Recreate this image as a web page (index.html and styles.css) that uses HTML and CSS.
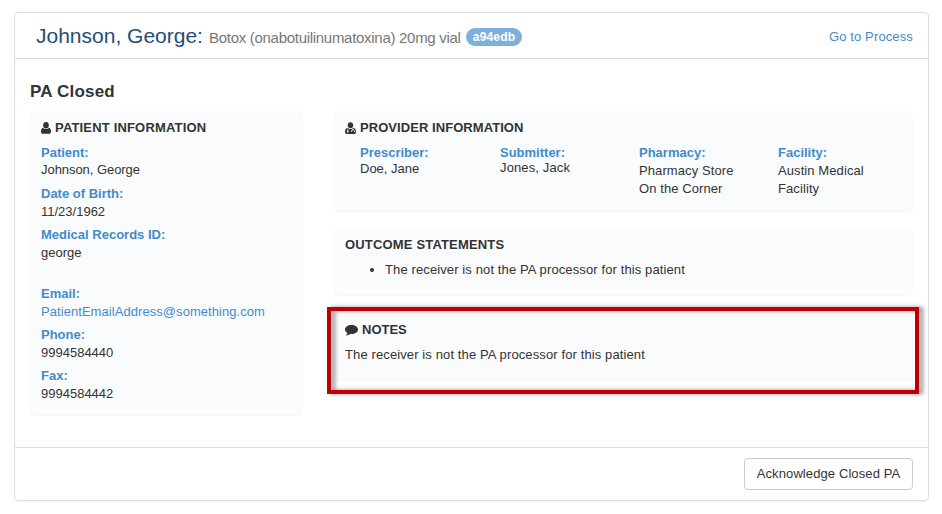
FILE: index.html
```html
<!DOCTYPE html>
<html lang="en">
<head>
<meta charset="utf-8">
<title>PA Closed</title>
<link rel="stylesheet" href="styles.css">
</head>
<body>
<main class="panel">
  <header class="panel-head">
    <h1><span class="name">Johnson, George:</span> <small class="drug">Botox (onabotuilinumatoxina) 20mg vial</small> <span class="badge">a94edb</span></h1>
    <a class="process" href="#">Go to Process</a>
  </header>
  <div class="panel-body">
    <h2><span>PA Closed</span></h2>
    <div class="columns">
      <section class="well patient">
        <h3><svg class="icon-user" viewBox="0 0 10 12" width="10" height="12"><ellipse cx="5" cy="3.3" rx="2.8" ry="3.2"/><path d="M2 5.700C.6 6 0 7.400 0 9.500 0 11 .8 11.800 2 11.800H8C9.200 11.800 10 11 10 9.500C10 7.400 9.400 6 8 5.700C7 7.400 3 7.400 2 5.700Z"/></svg><span>PATIENT INFORMATION</span></h3>
        <dl class="fields">
          <div class="first"><dt>Patient:</dt><dd><span>Johnson, George</span></dd></div>
          <div><dt>Date of Birth:</dt><dd>11/23/1962</dd></div>
          <div class="record"><dt>Medical Records ID:</dt><dd>george</dd></div>
          <div><dt>Email:</dt><dd class="email"><a href="#">PatientEmailAddress@something.com</a></dd></div>
          <div><dt>Phone:</dt><dd>9994584440</dd></div>
          <div><dt>Fax:</dt><dd>9994584442</dd></div>
        </dl>
      </section>
      <div class="details">
        <section class="well provider">
          <h3 class="provider-title"><svg class="icon-md" viewBox="0 0 11 12" width="11" height="12"><ellipse cx="5.500" cy="3.200" rx="2.700" ry="3"/><path d="M2.800 5.800C1 6 0 7.500 0 9.700 0 11.200.8 12 2.200 12h6.600c1.400 0 2.200-.8 2.200-2.300C11 7.500 10 6 8.200 5.800 7 7.500 4 7.500 2.800 5.800z"/><path class="detail" d="M2.800 6.500v2.500M8 6.500v1.300M6.500 10V9c0-1.600 3-1.600 3 0v1"/><circle class="hole" cx="2.800" cy="9.700" r=".9"/></svg><span>PROVIDER INFORMATION</span></h3>
          <dl class="provider-grid">
            <div><dt>Prescriber:</dt><dd class="tight">Doe, Jane</dd></div>
            <div><dt>Submitter:</dt><dd class="tighter">Jones, Jack</dd></div>
            <div><dt>Pharmacy:</dt><dd class="spaced">Pharmacy Store<br>On the Corner</dd></div>
            <div><dt>Facility:</dt><dd class="spaced">Austin Medical<br>Facility</dd></div>
          </dl>
        </section>
        <section class="well outcome">
          <h3><span>OUTCOME STATEMENTS</span></h3>
          <ul><li class="statement">The receiver is not the PA processor for this patient</li></ul>
        </section>
        <section class="well notes">
          <h3 class="notes-title"><svg class="icon-comment" viewBox="0 0 13 12" width="13" height="12"><path d="M6.500 1C2.900 1 0 3 0 5.500c0 1.400.9 2.700 2.400 3.500-.2 1-.7 1.600-1.300 2.200-.2.200 0 .5.300.4 1.500-.2 2.800-.8 3.800-1.700l1.300.1C10.100 10 13 8 13 5.500S10.100 1 6.500 1z"/></svg><span>NOTES</span></h3>
          <p class="statement">The receiver is not the PA processor for this patient</p>
          <div class="callout"></div>
        </section>
      </div>
    </div>
  </div>
  <footer class="panel-foot"><button type="button">Acknowledge Closed PA</button></footer>
</main>
</body>
</html>
```
FILE: styles.css
```css
* { box-sizing: border-box; }
body {
  margin: 0;
  padding: 12px 13px 13px 14px;
  background: #fff;
  color: #333;
  font: 13px/18px "Liberation Sans", Arial, sans-serif;
}
h1, h2, h3, p, dl, dd, ul { margin: 0; }
a { color: #428bca; text-decoration: none; }
.panel {
  display: flex;
  flex-direction: column;
  height: 489px;
  border: 1px solid #ddd;
  border-radius: 4px;
  box-shadow: 0 1px 1px rgba(0, 0, 0, .05);
}
.panel-head {
  display: flex;
  justify-content: space-between;
  height: 46px;
  padding: 0 15px 0 21px;
  border-bottom: 1px solid #ddd;
}
h1 {
  display: flex;
  align-items: baseline;
  font-weight: normal;
  line-height: 46px;
}
.name { width: 173px; color: #1f4e79; font-size: 21px; white-space: nowrap; }
.drug { width: 257px; color: #777; font-size: 15px; letter-spacing: -.29px; white-space: nowrap; }
.badge {
  align-self: flex-start;
  width: 56px;
  height: 18px;
  margin-top: 15px;
  border-radius: 9px;
  background: #7eb0de;
  color: #fff;
  font-size: 12px;
  font-weight: bold;
  letter-spacing: .15px;
  line-height: 18px;
  text-align: center;
}
.process { line-height: 48px; letter-spacing: .13px; }
.panel-body { flex: 1; padding: 20px 15px 0; }
h2 { height: 32px; font-size: 17px; line-height: 25px; letter-spacing: .2px; }
.columns { display: flex; gap: 31px; }
.well {
  border-radius: 4px;
  background: #fafbfd;
  box-shadow: 0 1px 1px rgba(0, 0, 0, .04);
  padding: 8px 11px 0;
}
.patient { width: 273px; height: 304px; }
.details { flex: 1; display: flex; flex-direction: column; gap: 17px; }
h3 {
  display: flex;
  align-items: center;
  height: 18px;
  margin-bottom: 7px;
  font-size: 13px;
  letter-spacing: .17px;
}
.provider-title { letter-spacing: .06px; }
.notes-title { letter-spacing: 0; }
h3 svg { fill: #333; flex: none; }
.icon-user, .icon-md, .icon-comment { margin-right: 4px; }
.detail { fill: none; stroke: #fafbfd; stroke-width: .8; }
.hole { fill: #fafbfd; }
dt { color: #428bca; font-weight: bold; }
.fields { display: flex; flex-direction: column; gap: 5px; }
.first dd { margin-top: -1px; margin-bottom: 1px; letter-spacing: -.05px; }
.record { margin-bottom: 18px; }
.email { letter-spacing: .06px; }
.provider { height: 100px; }
.provider-grid { display: grid; grid-template-columns: 140px 139px 139px 1fr; margin-left: 15px; white-space: nowrap; }
.tight { margin-top: -2px; }
.tighter { margin-top: -3px; letter-spacing: .13px; }
.spaced { letter-spacing: .09px; }
.statement { letter-spacing: .115px; }
.outcome { height: 67px; }
.outcome ul { padding-left: 40px; }
.notes { position: relative; height: 68px; padding-top: 9px; }
.callout {
  position: absolute;
  left: -7px;
  top: -5px;
  width: 592px;
  height: 87px;
  border: 4px solid #c00000;
  filter: drop-shadow(4px 0 2px rgba(0, 0, 0, .42));
  pointer-events: none;
}
.panel-foot {
  display: flex;
  justify-content: flex-end;
  height: 53px;
  padding: 10px 15px;
  border-top: 1px solid #ddd;
}
button {
  width: 169px;
  height: 32px;
  padding: 0;
  border: 1px solid #ccc;
  border-radius: 4px;
  background: #fff;
  color: #333;
  font: inherit;
  letter-spacing: .1px;
}
```
